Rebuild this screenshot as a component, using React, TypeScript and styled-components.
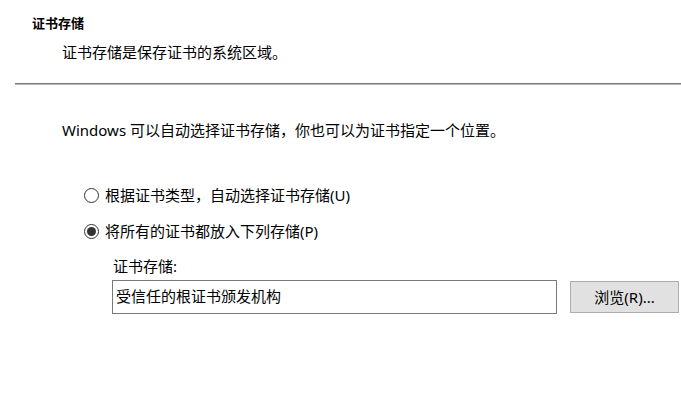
import styled, { createGlobalStyle } from 'styled-components'

const GlobalStyle = createGlobalStyle`
  html, body {
    margin: 0;
    padding: 0;
    background: #ffffff;
  }

  body {
    font-family: "Noto Sans", "Noto Sans CJK SC", sans-serif;
    color: #000000;
  }
`

type Option = {
  label: string
  checked: boolean
}

const options: Option[] = [
  { label: '根据证书类型，自动选择证书存储(U)', checked: false },
  { label: '将所有的证书都放入下列存储(P)', checked: true },
]

const App = (): JSX.Element => {
  return (
    <>
      <GlobalStyle />
      <Page>
        <Header>
          <Title>证书存储</Title>
          <Description>证书存储是保存证书的系统区域。</Description>
        </Header>
        <Separator />
        <Body>
          <Intro>Windows 可以自动选择证书存储，你也可以为证书指定一个位置。</Intro>
          <OptionList>
            {options.map((o) => (
              <OptionRow key={o.label}>
                <Radio $checked={o.checked} />
                <OptionLabel>{o.label}</OptionLabel>
              </OptionRow>
            ))}
          </OptionList>
          <StoreGroup>
            <FieldLabel>证书存储:</FieldLabel>
            <FieldRow>
              <StoreInput>受信任的根证书颁发机构</StoreInput>
              <BrowseBtn>浏览(R)...</BrowseBtn>
            </FieldRow>
          </StoreGroup>
        </Body>
      </Page>
    </>
  )
}

const Page = styled.div`
  width: 681px;
  height: 408px;
  display: flex;
  flex-direction: column;
  overflow: hidden;
`

const Header = styled.div`
  display: flex;
  flex-direction: column;
  padding: 13px 0 0 32px;
`

const Title = styled.div`
  height: 20px;
  line-height: 20px;
  font-size: 13px;
  font-weight: bold;
`

const Description = styled.div`
  margin: 9px 0 0 30px;
  height: 20px;
  line-height: 20px;
  font-size: 15px;
`

const Separator = styled.div`
  margin: 21px 0 0 15px;
  height: 0;
  border-top: 1px solid #7c7c7c;
  border-bottom: 1px solid #b9b9b9;
`

const Body = styled.div`
  display: flex;
  flex-direction: column;
  padding: 35px 0 0 62px;
  font-size: 15px;
`

const Intro = styled.div`
  height: 20px;
  line-height: 20px;
`

const OptionList = styled.div`
  display: flex;
  flex-direction: column;
  gap: 16px;
  margin: 45px 0 0 22px;
`

const OptionRow = styled.div`
  display: flex;
  align-items: center;
  gap: 6px;
  height: 20px;
`

const Radio = styled.span<{ $checked: boolean }>`
  box-sizing: border-box;
  width: 15px;
  height: 15px;
  border: 1px solid #333333;
  border-radius: 50%;
  display: grid;
  place-items: center;
  flex-shrink: 0;

  &::after {
    content: '';
    width: 9px;
    height: 9px;
    border-radius: 50%;
    background: #333333;
    display: ${(p) => (p.$checked ? 'block' : 'none')};
  }
`

const OptionLabel = styled.span`
  line-height: 20px;
`

const StoreGroup = styled.div`
  display: flex;
  flex-direction: column;
  margin: 15px 0 0 50px;
`

const FieldLabel = styled.div`
  height: 20px;
  line-height: 20px;
  padding-left: 1px;
`

const FieldRow = styled.div`
  display: flex;
  align-items: center;
  gap: 13px;
  margin-top: 4px;
`

const StoreInput = styled.div`
  box-sizing: border-box;
  width: 445px;
  height: 34px;
  border: 1px solid #7a7a7a;
  padding: 0 3px 4px;
  display: flex;
  align-items: center;
`

const BrowseBtn = styled.button`
  box-sizing: border-box;
  width: 109px;
  height: 32px;
  border: 1px solid #adadad;
  background: #e1e1e1;
  font-family: inherit;
  font-size: 15px;
  color: #000000;
  padding: 0 0 2px;
`

export default App
